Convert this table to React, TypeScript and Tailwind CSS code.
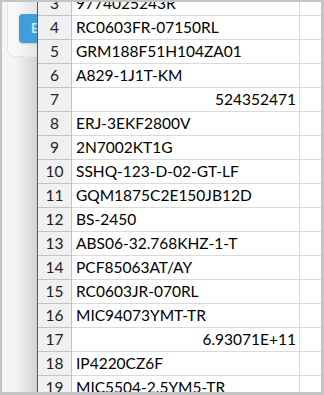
import React from "react";

type Row = { n: number; v: string; num?: boolean };

const rows: Row[] = [
  { n: 3, v: "9774025243R" },
  { n: 4, v: "RC0603FR-07150RL" },
  { n: 5, v: "GRM188F51H104ZA01" },
  { n: 6, v: "A829-1J1T-KM" },
  { n: 7, v: "524352471", num: true },
  { n: 8, v: "ERJ-3EKF2800V" },
  { n: 9, v: "2N7002KT1G" },
  { n: 10, v: "SSHQ-123-D-02-GT-LF" },
  { n: 11, v: "GQM1875C2E150JB12D" },
  { n: 12, v: "BS-2450" },
  { n: 13, v: "ABS06-32.768KHZ-1-T" },
  { n: 14, v: "PCF85063AT/AY" },
  { n: 15, v: "RC0603JR-070RL" },
  { n: 16, v: "MIC94073YMT-TR" },
  { n: 17, v: "6.93071E+11", num: true },
  { n: 18, v: "IP4220CZ6F" },
  { n: 19, v: "MIC5504-2.5YM5-TR" },
];

export default function App() {
  return (
    <div className="w-[324px] h-[395px] overflow-hidden flex bg-white border-l-2 border-t-2 border-r-[3px] border-b-[3px] border-[#c4c4c4] font-['Lato',sans-serif]">
      {/* app backdrop with the tool card peeking out */}
      <div className="relative w-[35px] shrink-0 overflow-hidden bg-[linear-gradient(to_right,#f5f5f5_35%,#d3d3d3)]">
        <div className="absolute left-[5px] -top-[4px] w-[60px] h-[59px] rounded-bl-[8px] bg-white/40 border-l border-b border-[#e6e6e6]" />
        <div className="absolute left-[17px] top-[12px] w-[30px] h-[29px] rounded-[4px] bg-[#3c9fd9] shadow-[0_1px_2px_rgba(0,0,0,0.15)] text-white/75 text-[13px] font-bold leading-[29px] pl-[12px]">
          E
        </div>
      </div>
      <div className="w-px shrink-0 bg-[#217346]" />
      <div className="flex-1 overflow-hidden">
        <div className="-mt-[10px]">
          {rows.map((r) => (
            <div
              key={r.n}
              className="grid grid-cols-[34px_228px_21px] h-[24px] text-[15.5px] text-black"
            >
              <div className="bg-[#f0f0f0] border-r border-b border-[#c2c2c2] flex items-center justify-center text-[#222]">
                {r.n}
              </div>
              <div
                className={
                  r.num
                    ? "border-r border-b border-[#dadada] flex items-center justify-end pr-[3px] whitespace-nowrap"
                    : "border-r border-b border-[#dadada] flex items-center pl-[4px] whitespace-nowrap"
                }
              >
                {r.v}
              </div>
              <div className="border-b border-[#dadada]" />
            </div>
          ))}
        </div>
      </div>
    </div>
  );
}
